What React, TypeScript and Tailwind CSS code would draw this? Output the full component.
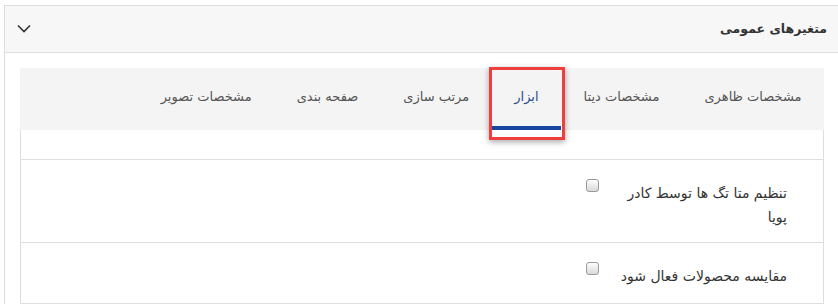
import React from "react";

const tabs = [
  "مشخصات ظاهری",
  "مشخصات دیتا",
  "ابزار",
  "مرتب سازی",
  "صفحه بندی",
  "مشخصات تصویر",
];

const activeTab = "ابزار";

function FakeCheckbox() {
  return (
    <span className="block w-[13px] h-[13px] rounded-[3px] border border-[#9a9a9a] bg-gradient-to-b from-[#fdfdfd] to-[#d9d9d9] shadow-[inset_0_1px_0_#fff]" />
  );
}

function Row({ label, tall }: { label: string; tall?: boolean }) {
  return (
    <div
      className={`flex border-t border-[#dedede] ${tall ? "h-[83px]" : "h-[61px]"}`}
    >
      <div className="w-[206px] pr-[36px] pt-[21px] text-[14px] leading-[24px] text-[#333]">
        {label}
      </div>
      <div className="pt-[19px] pr-[18px]">
        <FakeCheckbox />
      </div>
    </div>
  );
}

export default function App() {
  return (
    <div
      dir="rtl"
      className="w-[838px] h-[305px] overflow-hidden bg-white"
      style={{ fontFamily: '"DejaVu Sans", sans-serif' }}
    >
      <div className="mt-[5px] mr-[-2px] w-[836px] border border-[#dddddd] border-b-0">
        <div className="h-[47px] flex items-center justify-between bg-[#f7f7f7] border-b border-[#dddddd] pr-[12px] pl-[12px]">
          <div className="text-[12.5px] font-bold text-[#333]">متغیرهای عمومی</div>
          <svg width="14" height="9" viewBox="0 0 14 9" className="mt-[-2px]">
            <polyline
              points="1,1.5 7,7.5 13,1.5"
              fill="none"
              stroke="#333"
              strokeWidth="1.6"
            />
          </svg>
        </div>
        <div className="px-[15px] pt-[15px]">
          <div className="flex h-[62px] bg-[#f4f4f4]">
            {tabs.map((t) => {
              const active = t === activeTab;
              return (
                <div
                  key={t}
                  className={`relative flex items-center px-[22.5px] text-[13px] border-b-4 ${
                    active
                      ? "border-[#1745a0] text-[#284b8f]"
                      : "border-transparent text-[#555]"
                  }`}
                >
                  {t}
                  {active && (
                    <div className="absolute top-[-1px] bottom-[-14px] left-[-3px] right-[-4px] border-[3px] border-[#ef3e3e] shadow-[0_2px_6px_rgba(0,0,0,0.35)] pointer-events-none z-10" />
                  )}
                </div>
              );
            })}
          </div>
          <div className="border-x border-b border-[#dedede]">
            <div className="h-[29px]" />
            <Row label="تنظیم متا تگ ها توسط کادر پویا" tall />
            <Row label="مقایسه محصولات فعال شود" />
          </div>
        </div>
      </div>
    </div>
  );
}
